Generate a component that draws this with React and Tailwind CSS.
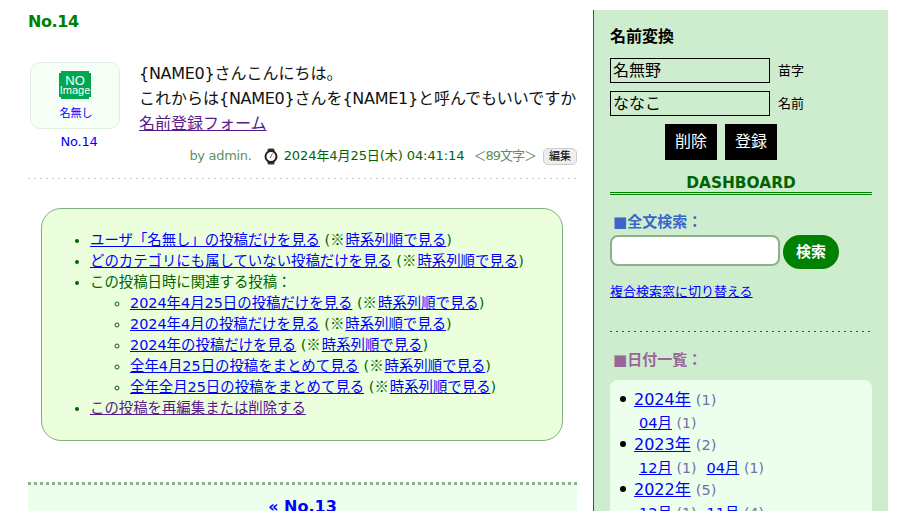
const F = { fontFamily: '"DejaVu Sans","Noto Sans CJK JP",sans-serif' };

function A({ children, className = "" }) {
  return <a href="#" className={`text-[#0000ff] underline ${className}`}>{children}</a>;
}

function Row({ text }) {
  return (
    <>
      <A>{text}</A> (<span className="font-['Noto_Sans_CJK_JP'] leading-none mr-px">※</span><A>時系列順で見る</A>)
    </>
  );
}

function NoImage() {
  return (
    <svg width="32" height="28" viewBox="0 0 32 28" className="block">
      <path d="M2 0H30V2H32V26H30V28H2V26H0V2H2Z" fill="#00a651" />
      <text x="16" y="14" textAnchor="middle" fontSize="13" fill="#fff" fontFamily="Liberation Sans">NO</text>
      <text x="16" y="23" textAnchor="middle" fontSize="11" fill="#fff" fontFamily="Liberation Sans">Image</text>
    </svg>
  );
}

function Watch() {
  return (
    <svg width="14" height="17" viewBox="0 0 14 17" className="shrink-0">
      <rect x="3.5" y="0.5" width="7" height="16" rx="1.5" fill="#333" />
      <circle cx="7" cy="8.5" r="5.5" fill="#fff" stroke="#222" strokeWidth="2" />
      <path d="M7 8.5L8.5 5.5" stroke="#c55" strokeWidth="1" />
      <path d="M7 8.5L6 10" stroke="#555" strokeWidth="1" />
    </svg>
  );
}

function Sub({ items }) {
  return (
    <div className="h-[22px] leading-[24px] pl-[29px] text-[14.5px] whitespace-nowrap">
      {items.map((m, i) => (
        <span key={i} className="mr-[10px]">
          <A>{m[0]}</A> <span className="text-[14px] text-[#7070a8]">({m[1]})</span>
        </span>
      ))}
    </div>
  );
}

function Year({ y, n, items }) {
  return (
    <div>
      <div className="relative h-[23px] leading-[23px] pl-[24px] text-[16px] whitespace-nowrap">
        <span className="absolute left-[10px] top-[8px] w-[6px] h-[6px] rounded-full bg-black" />
        <A>{y}</A> <span className="text-[14.5px] text-[#7070a8]">({n})</span>
      </div>
      <Sub items={items} />
    </div>
  );
}

export default function App() {
  return (
    <div className="h-[520px] bg-white overflow-hidden" style={F}>
      <div className="h-[511px] overflow-hidden flex items-start pl-[28px]">
        <main className="w-[549px] shrink-0">
          <h2 className="mt-[12px] h-[20px] leading-[20px] text-[16px] font-bold text-[#008000] tracking-[-0.4px]">No.14</h2>
          <div className="flex mt-[30px] h-[117px] relative bg-[repeating-linear-gradient(90deg,#cccccc_0_2px,transparent_2px_6px)] bg-bottom bg-no-repeat bg-[length:100%_1px]">
            <div className="w-[112px] pl-[2px] shrink-0">
              <div className="w-[90px] h-[67px] rounded-[10px] bg-[#f5fff5] border border-[#e0f0e0] flex flex-col items-center pt-[8px]">
                <NoImage />
                <a href="#" className="text-[#0000ff] text-[11px] leading-[14px] mt-[8px] ml-[2px]">名無し</a>
              </div>
              <div className="w-[98px] text-center text-[13px] leading-[16px] mt-[5px] text-[#0000ff] tracking-[-0.2px]">No.14</div>
            </div>
            <div className="flex-1 min-w-0 -ml-px">
              <div className="-mt-px text-[16px] leading-[25px] text-[#111] whitespace-nowrap">
                <p><span className="tracking-[-0.28px]">{"{NAME0}"}</span>さんこんにちは。</p>
                <p>これからは<span className="tracking-[-0.28px]">{"{NAME0}"}</span>さんを<span className="tracking-[-0.28px]">{"{NAME1}"}</span>と呼んでもいいですか</p>
                <p><a href="#" className="text-[#551a8b] underline">名前登録フォーム</a></p>
              </div>
              <div className="flex items-center justify-end mt-[10px] h-[20px] text-[13px] whitespace-nowrap">
                <span className="text-[#5f8f5f] mr-[12px] tracking-[-0.3px]">by admin.</span>
                <Watch />
                <span className="text-[#006400] ml-[6px] tracking-[-0.08px]">2024年4月25日(木) 04:41:14</span>
                <span className="text-[#5f8f5f] ml-[9px] tracking-[-1px]">＜89文字＞</span>
                <span className="ml-[7px] h-[17px] leading-[15px] px-[5px] text-[11px] text-black bg-[#eee] border border-[#ccc] rounded-[5px]">編集</span>
              </div>
            </div>
          </div>

          <div className="ml-[13px] mt-[29px] w-[522px] h-[233px] rounded-[20px] border border-[#80b080] bg-[#ebffdc] pt-[21px] text-[14.4px] leading-[21px] text-[#006400] whitespace-nowrap">
            <ul className="list-disc pl-[48px] marker:text-[#006400]">
              <li><Row text="ユーザ「名無し」の投稿だけを見る" /></li>
              <li><Row text="どのカテゴリにも属していない投稿だけを見る" /></li>
              <li>この投稿日時に関連する投稿：
                <ul className="list-[circle] pl-[40px]">
                  <li><Row text="2024年4月25日の投稿だけを見る" /></li>
                  <li><Row text="2024年4月の投稿だけを見る" /></li>
                  <li><Row text="2024年の投稿だけを見る" /></li>
                  <li><Row text="全年4月25日の投稿をまとめて見る" /></li>
                  <li><Row text="全年全月25日の投稿をまとめて見る" /></li>
                </ul>
              </li>
              <li><a href="#" className="text-[#551a8b] underline">この投稿を再編集または削除する</a></li>
            </ul>
          </div>

          <div className="mt-[41px] bg-[#ecffec] border-t-[3px] border-dotted border-[#8fb08f] text-center pt-[12px] text-[16px] leading-[20px] font-bold">
            <a href="#" className="text-[#0000ff]">« No.13</a>
          </div>
        </main>

        <aside className="ml-[16px] mt-[10px] w-[295px] h-[501px] shrink-0 border-l border-[#008000] bg-[#ceedce] pl-[16px] pr-[16px] text-black">
          <h3 className="mt-[17px] h-[20px] leading-[20px] text-[16px] font-bold">名前変換</h3>
          <div className="flex items-center mt-[11px] h-[25px]">
            <div className="w-[160px] h-[25px] border border-black leading-[23px] pl-[2px] text-[16px]">名無野</div>
            <span className="ml-[8px] text-[13px]">苗字</span>
          </div>
          <div className="flex items-center mt-[8px] h-[25px]">
            <div className="w-[160px] h-[25px] border border-black leading-[23px] pl-[2px] text-[16px]">ななこ</div>
            <span className="ml-[8px] text-[13px]">名前</span>
          </div>
          <div className="flex gap-[8px] mt-[8px] pl-[55px]">
            <button className="w-[52px] h-[36px] bg-black text-white text-[16px]">削除</button>
            <button className="w-[52px] h-[36px] bg-black text-white text-[16px]">登録</button>
          </div>
          <div className="mt-[14px] h-[18px] leading-[18px] text-center text-[15.4px] font-bold text-[#006400] w-[262px]">DASHBOARD</div>
          <div className="w-[262px] h-[3px] border-y border-[#008000]" />

          <h4 className="mt-[17px] h-[20px] leading-[20px] text-[15px] font-bold text-[#3a66cc] pl-[3px]">■全文検索：</h4>
          <div className="flex items-start gap-[3px] mt-[3px]">
            <div className="w-[170px] h-[31px] rounded-[8px] border-2 border-[#8fae8f] bg-white" />
            <button className="w-[56px] h-[34px] rounded-full bg-[#008000] text-white font-bold text-[15px]">検索</button>
          </div>
          <div className="mt-[14px] h-[18px] leading-[18px] text-[13px]"><A>複合検索窓に切り替える</A></div>
          <div className="mt-[30px] w-[262px] h-px bg-[repeating-linear-gradient(90deg,#008000_0_2px,transparent_2px_6px)]" />

          <h4 className="mt-[18px] h-[20px] leading-[20px] text-[15px] font-bold text-[#996699] pl-[3px]">■日付一覧：</h4>
          <div className="mt-[10px] w-[262px] h-[200px] rounded-[8px] bg-[#ecffec] pt-[8px]">
            <Year y="2024年" n="1" items={[["04月", 1]]} />
            <Year y="2023年" n="2" items={[["12月", 1], ["04月", 1]]} />
            <Year y="2022年" n="5" items={[["12月", 1], ["11月", 4]]} />
          </div>
        </aside>
      </div>
    </div>
  );
}
